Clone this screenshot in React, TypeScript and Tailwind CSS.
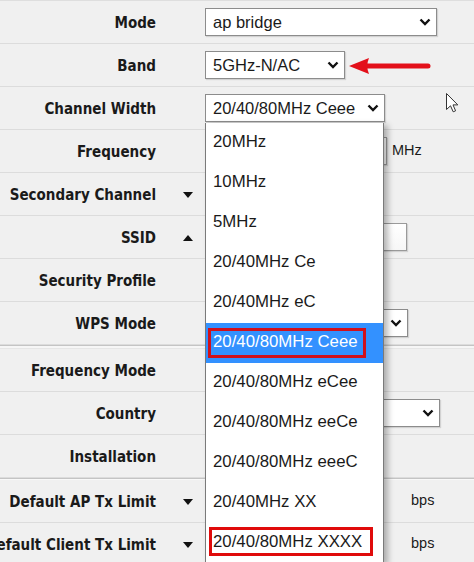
import React from "react";

type Row = {
  label: string;
  tri?: "up" | "down";
  value?: React.ReactNode;
  sep?: "thick" | "thin";
};

function Chevron() {
  return (
    <svg width="12" height="8" viewBox="0 0 12 8" className="shrink-0">
      <polyline points="1.5,1.5 6,6 10.5,1.5" fill="none" stroke="#111" strokeWidth="2.4" />
    </svg>
  );
}

function Select({ w, text }: { w: string; text: string }) {
  return (
    <div
      className={`${w} h-[28px] bg-white border border-[#8c8c8c] flex items-center justify-between pl-[7px] pr-[5px] text-[16.5px] text-[#1a1a1a] font-['Liberation_Sans',Arial,sans-serif] shadow-[1px_1px_1px_rgba(0,0,0,0.12)]`}
    >
      <span className="whitespace-nowrap">{text}</span>
      <Chevron />
    </div>
  );
}

function Input({ w }: { w: string }) {
  return (
    <div
      className={`${w} h-[28px] bg-gradient-to-b from-white to-[#f7f7f7] border border-[#9a9a9a] shadow-[1px_1px_1px_rgba(0,0,0,0.12)]`}
    />
  );
}

function Unit({ text, ml }: { text: string; ml: string }) {
  return (
    <span className={`${ml} text-[14.5px] text-[#1a1a1a] font-['Liberation_Sans',Arial,sans-serif]`}>
      {text}
    </span>
  );
}

function Tri({ dir }: { dir: "up" | "down" }) {
  return (
    <svg width="10" height="6" viewBox="0 0 10 6">
      {dir === "down" ? (
        <polygon points="0,0 10,0 5,6" fill="#111" />
      ) : (
        <polygon points="0,6 10,6 5,0" fill="#111" />
      )}
    </svg>
  );
}

const rows: Row[] = [
  { label: "Mode", value: <Select w="w-[232px]" text="ap bridge" /> },
  { label: "Band", value: <Select w="w-[140px]" text="5GHz-N/AC" /> },
  { label: "Channel Width", value: <Select w="w-[180px]" text="20/40/80MHz Ceee" /> },
  {
    label: "Frequency",
    value: (
      <>
        <Input w="w-[182px]" />
        <Unit text="MHz" ml="ml-[5px]" />
      </>
    ),
  },
  { label: "Secondary Channel", tri: "down" },
  { label: "SSID", tri: "up", value: <Input w="w-[202px]" /> },
  { label: "Security Profile" },
  { label: "WPS Mode", value: <Select w="w-[203px]" text="" />, sep: "thick" },
  { label: "Frequency Mode" },
  { label: "Country", value: <Select w="w-[235px]" text="" /> },
  { label: "Installation", sep: "thin" },
  {
    label: "Default AP Tx Limit",
    tri: "down",
    value: (
      <>
        <Input w="w-[172px]" />
        <Unit text="bps" ml="ml-[34px]" />
      </>
    ),
  },
  {
    label: "Default Client Tx Limit",
    tri: "down",
    value: (
      <>
        <Input w="w-[172px]" />
        <Unit text="bps" ml="ml-[34px]" />
      </>
    ),
  },
];

const options = [
  "20MHz",
  "10MHz",
  "5MHz",
  "20/40MHz Ce",
  "20/40MHz eC",
  "20/40/80MHz Ceee",
  "20/40/80MHz eCee",
  "20/40/80MHz eeCe",
  "20/40/80MHz eeeC",
  "20/40MHz XX",
  "20/40/80MHz XXXX",
];

export default function App() {
  return (
    <div className="relative w-[474px] h-[562px] overflow-hidden bg-[#f0f0f0] border-t border-[#dedede]">
      {rows.map((r, i) => (
        <React.Fragment key={i}>
          <div className="flex items-center h-[43px] border-b border-[#dcdcdc]">
            <div className="w-[156px] shrink-0 flex justify-end pt-[2px]">
              <span className="whitespace-nowrap text-[15px] font-bold text-[#1a1a1a] font-['DejaVu_Sans_Condensed','DejaVu_Sans',sans-serif]">
                {r.label}
              </span>
            </div>
            <div className="w-[49px] shrink-0 flex justify-end pr-[12px] pt-[1px]">
              {r.tri ? <Tri dir={r.tri} /> : null}
            </div>
            <div className="flex items-center">{r.value}</div>
          </div>
          {r.sep === "thick" ? (
            <div className="h-[4px] border-t border-[#c4c4c4] border-b border-b-[#e6e6e6] bg-[#f6f6f6]" />
          ) : null}
          {r.sep === "thin" ? (
            <div className="h-[2px] border-t border-[#c4c4c4] border-b border-b-[#f8f8f8]" />
          ) : null}
        </React.Fragment>
      ))}

      {/* open dropdown list */}
      <div className="absolute left-[205px] top-[122px] w-[179px] bg-white border-x border-[#7a7a7a] shadow-[4px_2px_6px_rgba(0,0,0,0.28)] font-['Liberation_Sans',Arial,sans-serif] text-[16.8px]">
        {options.map((o, i) => (
          <div
            key={o}
            className={`relative h-[40px] flex items-center pl-[7px] pb-[3px] whitespace-nowrap ${
              i === 5 ? "bg-[#3391ff] text-white" : "text-[#1a1a1a]"
            }`}
          >
            {o}
            {i === 5 ? (
              <div className="absolute left-[2px] top-[5px] w-[158px] h-[30px] border-[3px] border-[#d0101c]" />
            ) : null}
            {i === 10 ? (
              <div className="absolute left-[3px] top-[4px] w-[164px] h-[29px] border-[3px] border-[#e00b0b]" />
            ) : null}
          </div>
        ))}
      </div>

      {/* red annotation arrow */}
      <svg className="absolute left-[348px] top-[56px]" width="84" height="18" viewBox="0 0 84 18">
        <line x1="18" y1="9" x2="80" y2="9" stroke="#e3101a" strokeWidth="5" strokeLinecap="round" />
        <path d="M1 9 L21 1 Q17.5 9 21 17 Z" fill="#e3101a" />
      </svg>

      {/* mouse cursor */}
      <svg className="absolute left-[446px] top-[92px]" width="13" height="20" viewBox="0 0 13 20">
        <path
          d="M0.5 0.5 L0.5 16.5 L4.5 12.8 L7.2 18.8 L9.6 17.8 L7 11.9 L11.8 11.9 Z"
          fill="#fff"
          stroke="#333"
          strokeWidth="1"
          strokeLinejoin="round"
        />
      </svg>
    </div>
  );
}
